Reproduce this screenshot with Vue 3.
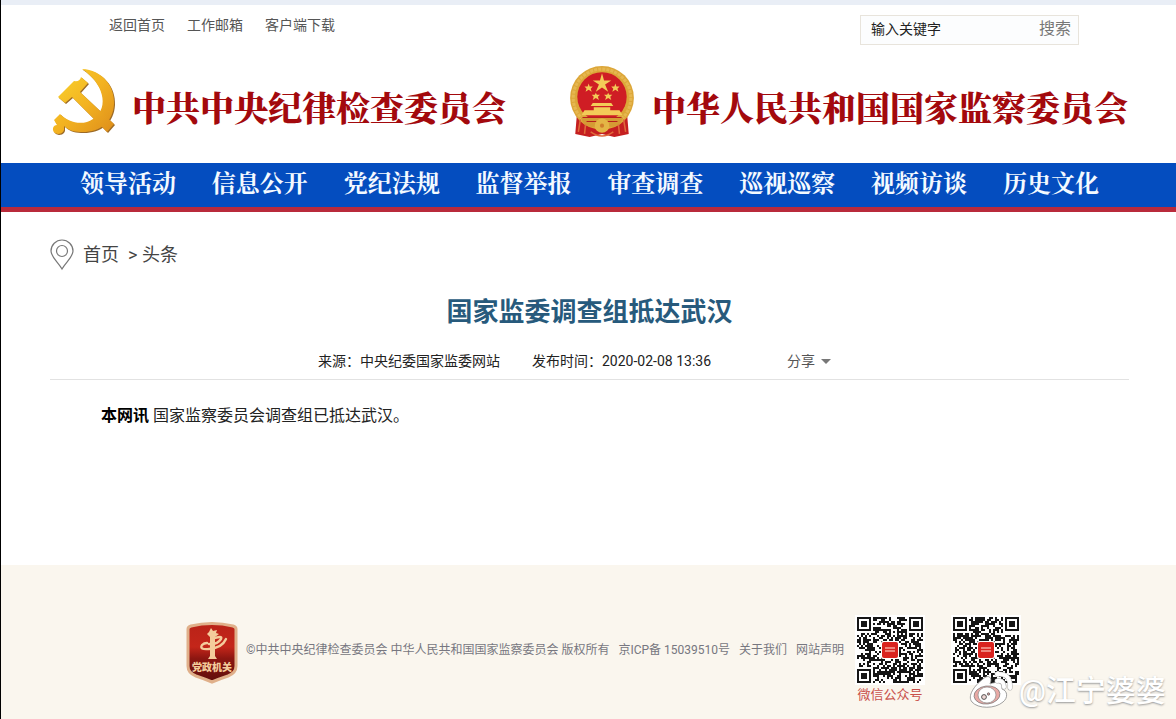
<script setup>
import { ref } from 'vue'

let keyword = ref('输入关键字')

let topLinks = ['返回首页', '工作邮箱', '客户端下载']

let navItems = ['领导活动', '信息公开', '党纪法规', '监督举报', '审查调查', '巡视巡察', '视频访谈', '历史文化']

let footerLinks = ['京ICP备 15039510号', '关于我们', '网站声明']

// three finder squares in the corners, noise everywhere else
let makeCode = (seed) => {
  let size = 33
  let path = ''
  let s = seed
  let finder = (x, y) => {
    let cx = x < 8 ? x : x > 24 ? x - 26 : -1
    let cy = y < 8 ? y : y > 24 ? y - 26 : -1
    let inX = x < 8 || x > 24
    let inY = y < 8 || y > 24
    if (!inX || !inY || (x > 24 && y > 24)) return null
    if (cx < 0 || cy < 0 || cx > 6 || cy > 6) return false
    let d = Math.max(Math.abs(cx - 3), Math.abs(cy - 3))
    return d !== 2
  }
  for (let y = 0; y < size; y++) {
    for (let x = 0; x < size; x++) {
      s = (s * 1103515245 + 12345) % 2147483648
      let f = finder(x, y)
      let dark = f === null ? s / 2147483648 > 0.44 : f
      if (dark) path += `M${x} ${y}h1v1h-1z`
    }
  }
  return path
}

let codes = [
  { path: makeCode(77), label: '微信公众号' },
  { path: makeCode(4021), label: '' },
]

let onSearch = () => {
  keyword.value = keyword.value.trim()
}
</script>

<template>
  <div class="page">
    <header>
      <div class="top">
        <nav class="top-links">
          <a v-for="item in topLinks" :key="item" href="#">{{ item }}</a>
        </nav>
        <form class="search" @submit.prevent="onSearch">
          <input v-model="keyword" type="text" aria-label="输入关键字" />
          <button type="submit">搜索</button>
        </form>
      </div>

      <div class="brands">
        <a class="brand" href="#">
          <svg class="party" viewBox="0 0 64 68" aria-hidden="true">
            <defs>
              <linearGradient id="gold" x1="0" y1="0" x2="1" y2="1">
                <stop offset="0" stop-color="#f8cf2c" />
                <stop offset="0.5" stop-color="#f3b321" />
                <stop offset="1" stop-color="#dd8d1b" />
              </linearGradient>
            </defs>
            <g fill="#9c6a26" transform="translate(1 1)">
              <path d="M6 29 22 13Q28 14 29 9L36 15 28 24 62 56 55 64 20 29 13 35Z" />
              <path d="M30 1C50 2 63 18 62 36C61 55 47 65 28 64C21 64 15 61 12 58Q13 66 6 66Q0 65 1 60Q2 57 5 57L2 52 8 46C17 55 31 58 41 51C59 39 50 14 30 1Z" />
            </g>
            <path fill="url(#gold)" d="M30 1C50 2 63 18 62 36C61 55 47 65 28 64C21 64 15 61 12 58Q13 66 6 66Q0 65 1 60Q2 57 5 57L2 52 8 46C17 55 31 58 41 51C59 39 50 14 30 1Z" />
            <path fill="url(#gold)" d="M6 29 22 13Q28 14 29 9L36 15 28 24 62 56 55 64 20 29 13 35Z" />
          </svg>
          <span>中共中央纪律检查委员会</span>
        </a>
        <a class="brand" href="#">
          <svg class="state" viewBox="0 0 66 70" aria-hidden="true">
            <path fill="#c51f20" d="M9 42H57L59 66 45 69 33 66 21 69 7 66Z" />
            <circle cx="33" cy="31" r="31" fill="#dca638" />
            <circle cx="33" cy="31" r="28" fill="none" stroke="#e6b750" stroke-width="3" stroke-dasharray="3 1" />
            <circle cx="33" cy="30" r="24" fill="#cf1d24" />
            <g fill="#f3cb58">
              <path d="M33 7 35 14H42L36 18 39 25 33 21 27 25 30 18 24 14H31Z" />
              <path d="M20 17 21 20H24L22 22 23 25 20 23 17 25 18 22 16 20H19Z" />
              <path d="M46 17 47 20H50L48 22 49 25 46 23 43 25 44 22 42 20H45Z" />
              <path d="M27 26 28 28H31L29 30 30 33 27 31 24 33 25 30 23 28H26Z" />
              <path d="M39 26 40 28H43L41 30 42 33 39 31 36 33 37 30 35 28H38Z" />
              <path d="M24 36H42L44 39H22ZM25 40H41V43H50L53 48H13L16 43H25Z" />
            </g>
            <path fill="#d59b34" d="M12 50H54L50 57Q43 61 38 58A6 5 0 0 0 28 58Q23 61 16 57Z" />
            <path fill="none" stroke="#b8201d" stroke-width="1" d="M14 50H52M18 54H48" />
            <circle cx="33" cy="58" r="7" fill="#e4b545" />
            <circle cx="33" cy="58" r="2" fill="#cf7d2a" />
            <path fill="none" stroke="#e06a3b" stroke-width="1.5" d="M12 52 10 64M17 57 16 66M54 52 56 64M49 57 50 66M22 64Q33 72 44 64" />
          </svg>
          <span>中华人民共和国国家监察委员会</span>
        </a>
      </div>

      <nav class="main-nav">
        <a v-for="item in navItems" :key="item" href="#">{{ item }}</a>
      </nav>
    </header>

    <main>
      <div class="crumbs">
        <svg viewBox="0 0 24 32" fill="none" stroke="#777" stroke-width="1.2" aria-hidden="true">
          <path d="M12 30C8 23 1 18 1 12a11 11 0 0 1 22 0C23 18 16 23 12 30Z" />
          <circle cx="12" cy="12" r="5.5" />
        </svg>
        <a href="#">首页</a>
        <span>&gt; <a href="#">头条</a></span>
      </div>

      <h1>国家监委调查组抵达武汉</h1>

      <div class="meta">
        <span>来源：中央纪委国家监委网站</span>
        <span>发布时间：2020-02-08 13:36</span>
        <button type="button" class="share">分享<i></i></button>
      </div>

      <p class="text"><b>本网讯</b> 国家监察委员会调查组已抵达武汉。</p>
    </main>

    <footer>
      <svg class="badge" viewBox="0 0 52 62" aria-hidden="true">
        <defs>
          <linearGradient id="shield" x1="0" y1="0" x2="0" y2="1">
            <stop offset="0" stop-color="#b92318" />
            <stop offset="0.4" stop-color="#c4261a" />
            <stop offset="0.6" stop-color="#8c1611" />
            <stop offset="1" stop-color="#5e0e0b" />
          </linearGradient>
        </defs>
        <path fill="url(#shield)" stroke="#e0b08a" stroke-width="3" d="M2 7Q2 5 5 4Q26 -1 47 4Q50 5 50 7V44Q50 51 42 54Q33 57 26 60Q19 57 10 54Q2 51 2 44Z" />
        <path fill="#f4cc9c" d="M23 10 25 6 27 9 31 8 30 11 33 12 29 15V34L31 37H22L24 34V15L21 12Z" />
        <path fill="none" stroke="#f4cc9c" stroke-width="2.4" stroke-linecap="round" d="M26 17Q37 13 35 17Q31 23 23 22M40 17Q36 26 23 27Q13 28 16 23Q18 21 21 21" />
        <text x="26" y="49" text-anchor="middle">党政机关</text>
      </svg>
      <div class="legal">
        <span>©中共中央纪律检查委员会 中华人民共和国国家监察委员会 版权所有</span>
        <a v-for="item in footerLinks" :key="item" href="#">{{ item }}</a>
      </div>
      <div class="codes">
        <figure v-for="code in codes" :key="code.path">
          <svg viewBox="-1 -1 35 35" aria-hidden="true">
            <rect x="-1" y="-1" width="35" height="35" fill="#fff" />
            <path fill="#161616" shape-rendering="crispEdges" :d="code.path" />
            <rect x="12" y="12" width="9" height="9" rx="1" fill="#fff" />
            <rect x="12.5" y="12.5" width="8" height="8" rx="1" fill="#d9231f" />
            <path stroke="#f3a79c" stroke-width="0.8" d="M14 15.5h5M14 17h5" />
          </svg>
          <figcaption v-if="code.label">{{ code.label }}</figcaption>
        </figure>
      </div>
    </footer>

    <div class="watermark">
      <svg viewBox="0 0 46 40" aria-hidden="true">
        <path fill="#fff" stroke="#888" stroke-width="0.8" d="M14 8C19 3 24 6 21 13C28 10 34 11 33 18C39 20 39 27 34 31C26 38 9 38 3 31C-2 25 5 15 14 8Z" />
        <ellipse cx="18" cy="24" rx="13" ry="9" fill="#e9a9a5" stroke="#777" stroke-width="0.7" transform="rotate(-7 18 24)" />
        <ellipse cx="18" cy="24" rx="9" ry="8" fill="#fff" stroke="#888" stroke-width="0.7" />
        <circle cx="15" cy="26" r="2.4" fill="#f0d8d6" stroke="#444" stroke-width="0.9" />
        <circle cx="19.5" cy="23" r="1.2" fill="#c99" stroke="#444" stroke-width="0.6" />
        <g fill="none" stroke-linecap="round">
          <path stroke="#aaa" stroke-width="5" d="M28 3Q42 2 41 17M28 10Q35 9 35 16" />
          <path stroke="#fff" stroke-width="4" d="M28 3Q42 2 41 17M28 10Q35 9 35 16" />
        </g>
      </svg>
      <span>@江宁婆婆</span>
    </div>
  </div>
</template>

<style>
body {
  margin: 0;
}
</style>

<style scoped>
.page {
  position: relative;
  box-sizing: border-box;
  min-height: 100vh;
  display: flex;
  flex-direction: column;
  border-left: 1px solid #000;
  background: #fff;
  color: #222;
  font-family: Roboto, "Noto Sans CJK SC", sans-serif;
  font-size: 14px;
  line-height: 20px;
}

a {
  color: inherit;
  text-decoration: none;
}

input,
button {
  padding: 0;
  border: none;
  background: none;
  font: inherit;
}

button {
  cursor: pointer;
}

.top {
  display: flex;
  justify-content: space-between;
  align-items: flex-start;
  padding: 10px 97px 0 108px;
  border-top: 5px solid #e9eef6;
}

.top-links {
  display: flex;
  gap: 22px;
  color: #555;
}

.search {
  display: flex;
  box-sizing: border-box;
  width: 219px;
  height: 30px;
  padding: 0 7px 2px 10px;
  border: 1px solid #e8e4dc;
  background: #fcfdfe;
}

.search input {
  flex: 1;
  min-width: 0;
  color: #222;
  outline: none;
}

.search button {
  color: #777;
  font-size: 16px;
}

.brands {
  display: flex;
  justify-content: space-between;
  align-items: center;
  padding: 21px 48px 25px 51px;
}

.brand {
  display: flex;
  align-items: center;
  gap: 16px;
  color: #a3090d;
  font-family: "Noto Serif CJK SC", "Noto Sans CJK SC", serif;
  font-size: 34px;
  font-weight: 900;
  line-height: 44px;
  white-space: nowrap;
}

.brand span {
  padding-top: 10px;
}

.party {
  width: 64px;
  height: 68px;
}

.state {
  width: 68px;
  height: 72px;
}

.main-nav {
  display: flex;
  justify-content: space-between;
  padding: 0 77px 6px 79px;
  border-bottom: 5px solid #b92a3b;
  background: #044dbf;
  color: #f4faff;
  font-family: "Noto Serif CJK SC", "Noto Sans CJK SC", serif;
  font-size: 24px;
  font-weight: 700;
  line-height: 38px;
}

main {
  flex: 1;
  padding: 26px 47px 0 49px;
}

.crumbs {
  display: flex;
  align-items: center;
  gap: 9px;
  color: #444;
  font-size: 18px;
  line-height: 34px;
}

.crumbs svg {
  width: 24px;
  height: 32px;
}

h1 {
  margin: 20px 0 0;
  color: #275a7c;
  font-size: 26px;
  line-height: 40px;
  text-align: center;
}

.meta {
  display: flex;
  justify-content: center;
  padding: 19px 30px 8px 0;
  border-bottom: 1px solid #e2e2e2;
}

.meta span {
  margin-right: 32px;
}

.share {
  display: flex;
  align-items: center;
  gap: 6px;
  margin-left: 44px;
  color: #555;
}

.share i {
  border: 5px solid transparent;
  border-top-color: #777;
  border-bottom: none;
}

.text {
  margin: 24px 51px;
  color: #222;
  font-size: 16px;
  line-height: 24px;
}

.text b {
  color: #000;
}

footer {
  display: flex;
  justify-content: center;
  box-sizing: border-box;
  min-height: 154px;
  padding: 50px 0 12px 30px;
  background: #faf6ee;
}

.badge {
  width: 52px;
  height: 62px;
  margin-top: 7px;
}

.badge text {
  fill: #f4cc9c;
  font-size: 10px;
  font-weight: 900;
}

.legal {
  display: flex;
  gap: 9px;
  margin: 25px 11px 0 8px;
  color: #777780;
  font-size: 12px;
  white-space: nowrap;
}

.codes {
  display: flex;
  gap: 26px;
}

figure {
  width: 70px;
  margin: 0;
  text-align: center;
}

figure svg {
  display: block;
  width: 70px;
  height: 70px;
}

figcaption {
  color: #c9504b;
  font-size: 13px;
}

/* lies over the footer's corner */
.watermark {
  position: absolute;
  right: 10px;
  bottom: 8px;
  display: flex;
  align-items: center;
  gap: 4px;
  color: #fff;
  font-size: 30px;
  font-weight: 500;
  line-height: 38px;
  text-shadow: 0 1px 2px #999;
}

.watermark svg {
  width: 46px;
  height: 40px;
}
</style>
